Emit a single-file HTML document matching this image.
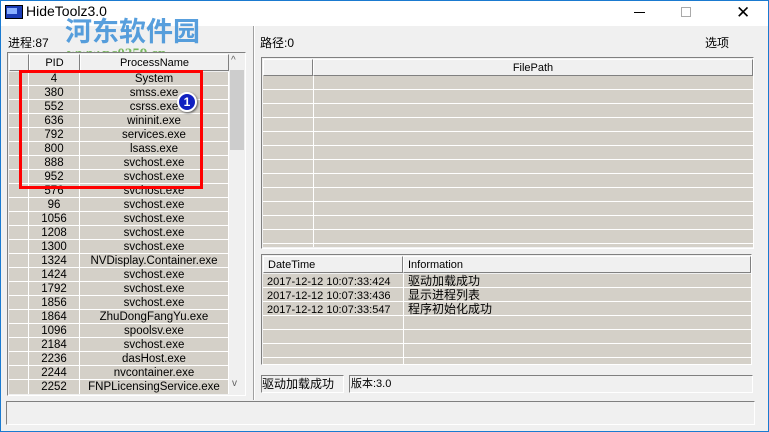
<!DOCTYPE html><html><head><meta charset="utf-8"><style>
*{margin:0;padding:0;box-sizing:border-box}
body{width:769px;height:432px;overflow:hidden;background:#f0f0f0;font-family:"Liberation Sans","Noto Sans CJK SC",sans-serif;font-size:11px;color:#000;position:relative}
.a{position:absolute}
.win{left:0;top:0;width:769px;height:432px;border:1px solid #1a7ad0}
.title{left:1px;top:1px;width:767px;height:25px;background:#fff}
.grid{background:#d4d0c8}
.sunk{border:1px solid;border-color:#808080 #fff #fff #808080}
.hd{background:#f0f0f0;border:1px solid;border-color:#fff #808080 #808080 #fff;text-align:center;line-height:16px;height:17px}
.row{position:absolute;left:0;height:14px;border-bottom:1px solid #fff;line-height:15px}
.c{position:absolute;top:0;text-align:center;height:14px}
.vl{position:absolute;top:0;width:1px;background:#fff}
</style></head><body>
<div class="a win"></div>
<div class="a title"></div>
<div class="a" style="left:5px;top:5px;width:18px;height:14px;background:#1a3bb5;border:1px solid #000"></div>
<div class="a" style="left:7px;top:8px;width:10px;height:6px;background:#8ab0ff"></div>
<div class="a" style="left:26px;top:3px;font-size:14px">HideToolz3.0</div>
<div class="a" style="left:634px;top:12px;width:11px;height:1px;background:#000"></div>
<div class="a" style="left:681px;top:7px;width:10px;height:10px;border:1px solid #aaa"></div>
<div class="a" style="left:736px;top:0px;font-size:17px;line-height:25px">✕</div>
<div class="a" style="left:65px;top:12px;font-size:27px;font-weight:bold;color:#3b8fd8;opacity:.85;font-family:'Noto Sans CJK SC',sans-serif;line-height:36px">河东软件园</div>
<div class="a" style="left:67px;top:46px;font-size:15px;font-weight:bold;color:#5aa83a;opacity:.8;font-family:'Liberation Serif',serif">www.pc0359.cn</div>
<div class="a" style="left:8px;top:34px;font-size:12px">进程:87</div>
<div class="a" style="left:253px;top:26px;width:2px;height:374px;border-left:1px solid #a0a0a0;border-right:1px solid #fff"></div>

<!-- left list -->
<div class="a sunk" style="left:7px;top:52px;width:239px;height:344px;background:#f0f0f0"></div>
<div class="a grid" style="left:9px;top:72px;width:220px;height:322px;overflow:hidden">
<div class="vl" style="left:19px;height:322px"></div><div class="vl" style="left:70px;height:322px"></div><div class="vl" style="left:219px;height:322px"></div>
</div>
<div class="a hd" style="left:9px;top:54px;width:20px"></div>
<div class="a hd" style="left:29px;top:54px;width:51px">PID</div>
<div class="a hd" style="left:80px;top:54px;width:149px">ProcessName</div>
<div class="a" style="left:229px;top:54px;width:16px;height:340px;background:#f0f0f0"></div>
<div class="a" style="left:231px;top:55px;font-size:10px;color:#606060">^</div>
<div class="a" style="left:230px;top:70px;width:14px;height:80px;background:#cdcdcd"></div>
<div class="a" style="left:232px;top:378px;font-size:10px;color:#606060">v</div>
<div class="a" style="left:9px;top:72px;width:220px;font-size:11.5px">
<div class="row" style="top:0;width:220px"><span class="c" style="left:20px;width:50px">4</span><span class="c" style="left:71px;width:148px">System</span></div>
<div class="row" style="top:14px;width:220px"><span class="c" style="left:20px;width:50px">380</span><span class="c" style="left:71px;width:148px">smss.exe</span></div>
<div class="row" style="top:28px;width:220px"><span class="c" style="left:20px;width:50px">552</span><span class="c" style="left:71px;width:148px">csrss.exe</span></div>
<div class="row" style="top:42px;width:220px"><span class="c" style="left:20px;width:50px">636</span><span class="c" style="left:71px;width:148px">wininit.exe</span></div>
<div class="row" style="top:56px;width:220px"><span class="c" style="left:20px;width:50px">792</span><span class="c" style="left:71px;width:148px">services.exe</span></div>
<div class="row" style="top:70px;width:220px"><span class="c" style="left:20px;width:50px">800</span><span class="c" style="left:71px;width:148px">lsass.exe</span></div>
<div class="row" style="top:84px;width:220px"><span class="c" style="left:20px;width:50px">888</span><span class="c" style="left:71px;width:148px">svchost.exe</span></div>
<div class="row" style="top:98px;width:220px"><span class="c" style="left:20px;width:50px">952</span><span class="c" style="left:71px;width:148px">svchost.exe</span></div>
<div class="row" style="top:112px;width:220px"><span class="c" style="left:20px;width:50px">576</span><span class="c" style="left:71px;width:148px">svchost.exe</span></div>
<div class="row" style="top:126px;width:220px"><span class="c" style="left:20px;width:50px">96</span><span class="c" style="left:71px;width:148px">svchost.exe</span></div>
<div class="row" style="top:140px;width:220px"><span class="c" style="left:20px;width:50px">1056</span><span class="c" style="left:71px;width:148px">svchost.exe</span></div>
<div class="row" style="top:154px;width:220px"><span class="c" style="left:20px;width:50px">1208</span><span class="c" style="left:71px;width:148px">svchost.exe</span></div>
<div class="row" style="top:168px;width:220px"><span class="c" style="left:20px;width:50px">1300</span><span class="c" style="left:71px;width:148px">svchost.exe</span></div>
<div class="row" style="top:182px;width:220px"><span class="c" style="left:20px;width:50px">1324</span><span class="c" style="left:71px;width:148px">NVDisplay.Container.exe</span></div>
<div class="row" style="top:196px;width:220px"><span class="c" style="left:20px;width:50px">1424</span><span class="c" style="left:71px;width:148px">svchost.exe</span></div>
<div class="row" style="top:210px;width:220px"><span class="c" style="left:20px;width:50px">1792</span><span class="c" style="left:71px;width:148px">svchost.exe</span></div>
<div class="row" style="top:224px;width:220px"><span class="c" style="left:20px;width:50px">1856</span><span class="c" style="left:71px;width:148px">svchost.exe</span></div>
<div class="row" style="top:238px;width:220px"><span class="c" style="left:20px;width:50px">1864</span><span class="c" style="left:71px;width:148px">ZhuDongFangYu.exe</span></div>
<div class="row" style="top:252px;width:220px"><span class="c" style="left:20px;width:50px">1096</span><span class="c" style="left:71px;width:148px">spoolsv.exe</span></div>
<div class="row" style="top:266px;width:220px"><span class="c" style="left:20px;width:50px">2184</span><span class="c" style="left:71px;width:148px">svchost.exe</span></div>
<div class="row" style="top:280px;width:220px"><span class="c" style="left:20px;width:50px">2236</span><span class="c" style="left:71px;width:148px">dasHost.exe</span></div>
<div class="row" style="top:294px;width:220px"><span class="c" style="left:20px;width:50px">2244</span><span class="c" style="left:71px;width:148px">nvcontainer.exe</span></div>
<div class="row" style="top:308px;width:220px;border:0"><span class="c" style="left:20px;width:50px">2252</span><span class="c" style="left:71px;width:148px">FNPLicensingService.exe</span></div>
</div>
<div class="a" style="left:19px;top:70px;width:184px;height:119px;border:3px solid #f00"></div>
<div class="a" style="left:177px;top:92px;width:20px;height:20px;border-radius:50%;background:#1020c0;border:2px solid #fff;color:#fff;font-weight:bold;font-size:12px;text-align:center;line-height:16px;box-shadow:1px 1px 2px #555">1</div>

<!-- right -->
<div class="a" style="left:260px;top:34px;font-size:12px">路径:0</div>
<div class="a" style="left:705px;top:34px;font-size:12px">选项</div>
<div class="a sunk" style="left:261px;top:57px;width:493px;height:192px"></div>
<div class="a grid" style="left:263px;top:76px;width:490px;height:171px;background:repeating-linear-gradient(#d4d0c8 0 13px,#fff 13px 14px)"></div>
<div class="a" style="left:313px;top:76px;width:1px;height:171px;background:#fff"></div>
<div class="a hd" style="left:263px;top:59px;width:50px"></div>
<div class="a hd" style="left:313px;top:59px;width:440px">FilePath</div>

<div class="a sunk" style="left:261px;top:254px;width:491px;height:111px"></div>
<div class="a grid" style="left:263px;top:274px;width:488px;height:90px;background:repeating-linear-gradient(#d4d0c8 0 13px,#fff 13px 14px)"></div>
<div class="a" style="left:403px;top:274px;width:1px;height:90px;background:#fff"></div>
<div class="a hd" style="left:263px;top:256px;width:140px;text-align:left;padding-left:4px">DateTime</div>
<div class="a hd" style="left:403px;top:256px;width:348px;text-align:left;padding-left:4px">Information</div>
<div class="a" style="left:267px;top:275px;line-height:14px">2017-12-12 10:07:33:424<br>2017-12-12 10:07:33:436<br>2017-12-12 10:07:33:547</div>
<div class="a" style="left:408px;top:274px;line-height:14px;font-size:12px">驱动加载成功<br>显示进程列表<br>程序初始化成功</div>

<div class="a sunk" style="left:261px;top:375px;width:83px;height:18px;font-size:12px;line-height:16px">驱动加载成功</div>
<div class="a sunk" style="left:349px;top:375px;width:404px;height:18px;line-height:16px;padding-left:1px">版本:3.0</div>
<div class="a sunk" style="left:6px;top:401px;width:749px;height:24px"></div>
</body></html>
